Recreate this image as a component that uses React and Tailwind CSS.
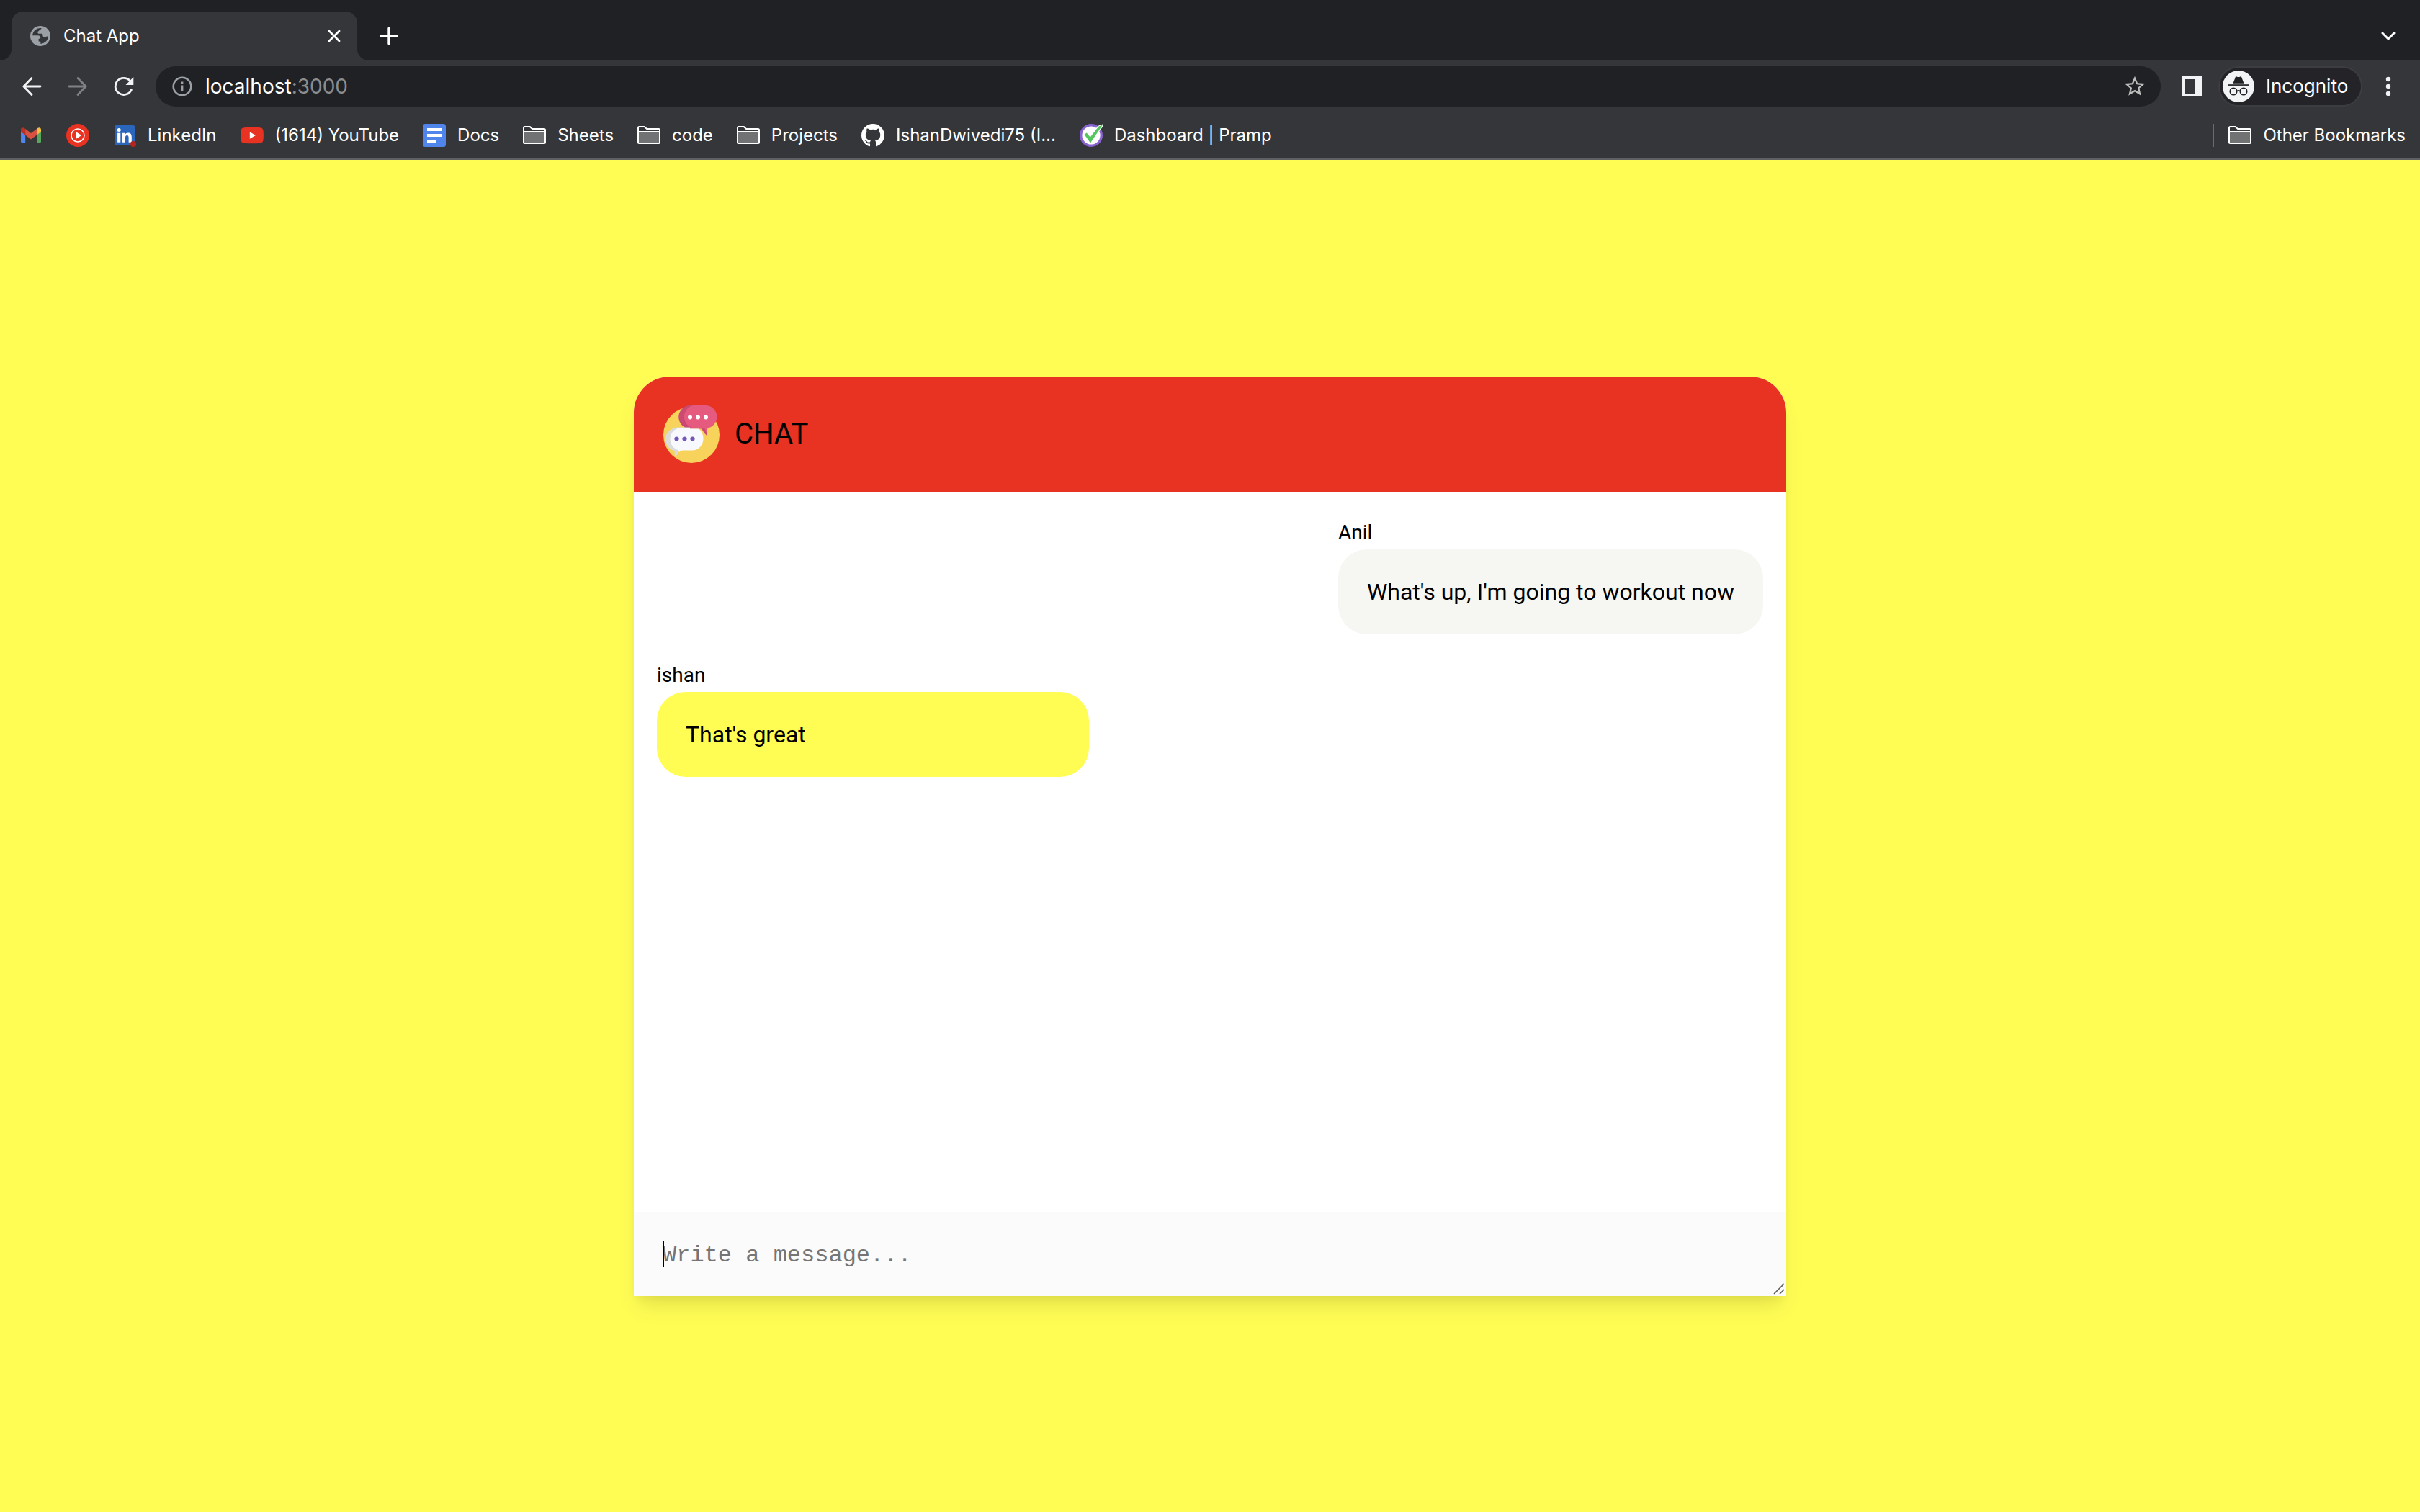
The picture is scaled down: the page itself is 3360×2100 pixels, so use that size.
import React from "react";

const Globe = () => (
  <svg viewBox="0 0 28 28" className="size-7 shrink-0" aria-hidden="true">
    <circle cx="14" cy="14" r="14" fill="#9aa0a6" />
    <path
      d="M15.500 3.100C9 2.400 3.800 6.700 3.100 13.200h7.600c2 0 3.600 1.200 3.600 2.800 0 1.300-.9 2-2.700 2v2.600c0 1.200.8 1.400 1.700 1.400.8 0 1.100.5 1.100 1.300v1.600C20.500 24.600 24.900 19.600 24.900 14.500h-2.200c-.9 1-2 1.400-3.300 1.100-1.500-.3-2.100-1.500-2-2.900.1-1.200-.5-1.900-1.700-1.900h-3.400c-1.300 0-2-.8-2-1.900s.8-1.800 1.800-1.900c.4-1.500 1-2.100 2.300-2.300.8-.1 1.100-.7 1.100-1.600z"
      fill="#35363a"
    />
  </svg>
);

const Close = () => (
  <svg viewBox="0 0 18 18" className="size-[18px]" aria-hidden="true">
    <path d="M2 2l14 14M16 2L2 16" stroke="#fff" strokeWidth="2.800" strokeLinecap="round" />
  </svg>
);

const Plus = () => (
  <svg viewBox="0 0 24 24" className="size-6" aria-hidden="true">
    <path d="M12 1.500v21M1.500 12h21" stroke="#fff" strokeWidth="3.400" strokeLinecap="round" />
  </svg>
);

const Chevron = () => (
  <svg viewBox="0 0 20 12" className="h-3 w-5" fill="none" aria-hidden="true">
    <path d="M2 2l8 8 8-8" stroke="#fff" strokeWidth="3" strokeLinecap="round" strokeLinejoin="miter" />
  </svg>
);

const Arrow = ({ color, flip }) => (
  <svg viewBox="0 0 28 28" className={flip ? "size-7 rotate-180" : "size-7"} fill="none" aria-hidden="true">
    <path d="M14 2.500L2.800 14 14 25.500M3 14h23" stroke={color} strokeWidth="2.800" strokeLinecap="round" strokeLinejoin="round" />
  </svg>
);

const Reload = () => (
  <svg viewBox="0 0 28 28" className="size-7" fill="none" aria-hidden="true">
    <path d="M24.300 18.800A11.600 11.600 0 1 1 22.300 6" stroke="#f1f3f4" strokeWidth="2.800" strokeLinecap="round" />
    <path d="M27.300 1v11H16.500z" fill="#f1f3f4" />
  </svg>
);

const Info = () => (
  <svg viewBox="0 0 28 28" className="size-7 shrink-0" fill="none" aria-hidden="true">
    <circle cx="14" cy="14" r="12.300" stroke="#9aa0a6" strokeWidth="2.600" />
    <path d="M12.600 12.600h2.800V20.500h-2.800zM12.600 7.500h2.800v2.800h-2.800z" fill="#9aa0a6" />
  </svg>
);

const Star = () => (
  <svg viewBox="0 0 24 24" className="size-[34px]" aria-hidden="true">
    <path
      d="M22 9.240l-7.190-.62L12 2 9.190 8.630 2 9.240l5.460 4.730L5.820 21 12 17.270 18.180 21l-1.630-7.030L22 9.240zM12 15.400l-3.760 2.270 1-4.280-3.320-2.880 4.380-.38L12 6.100l1.710 4.040 4.380.38-3.320 2.880 1 4.280L12 15.400z"
      fill="#bdbdbd"
    />
  </svg>
);

const SidePanel = () => (
  <svg viewBox="0 0 28 28" className="size-7" aria-hidden="true">
    <path d="M0 0h28v28H0zM4 4v20h14V4z" fill="#f1f3f4" fillRule="evenodd" />
  </svg>
);

const Spy = () => (
  <svg viewBox="0 0 44 44" className="size-11 shrink-0" aria-hidden="true">
    <circle cx="22" cy="22" r="22" fill="#f1f3f4" />
    <path d="M17.700 9.300c.3-.9 1-1.200 1.800-.8 1.700.7 3.300.7 5 0 .8-.4 1.500-.1 1.800.8L29.500 17.800h-15z" fill="#202124" />
    <path d="M8 19.200h28v1.700H8z" fill="#202124" />
    <g fill="none" stroke="#202124" strokeWidth="1.500">
      <circle cx="15" cy="29" r="4.800" />
      <circle cx="29" cy="29" r="4.800" />
      <path d="M19.800 28.500c1.400-1 3-1 4.400 0" />
    </g>
  </svg>
);

const Dots = () => (
  <svg viewBox="0 0 8 28" className="h-7 w-2" fill="#f1f3f4" aria-hidden="true">
    <circle cx="4" cy="4" r="3.200" />
    <circle cx="4" cy="14" r="3.200" />
    <circle cx="4" cy="24" r="3.200" />
  </svg>
);

const Gmail = () => (
  <svg viewBox="0 0 32 32" className="size-8 shrink-0" aria-hidden="true">
    <path d="M2 10.500l6.200 4.500v11.500H4a2 2 0 0 1-2-2z" fill="#4f86ec" />
    <path d="M24 15l6-4.500v14a2 2 0 0 1-2 2h-4z" fill="#58a55c" />
    <path d="M24 7l1.600-1.200c1.900-1.300 4.400-.2 4.400 2.200v3l-6 4.500z" fill="#f2be42" />
    <path d="M8.200 7L6.400 5.800C4.500 4.500 2 5.600 2 8v3l6.200 4.500z" fill="#b83226" />
    <path d="M8.200 7L16 13l8-6v8.500l-8 6-7.800-6z" fill="#d85140" />
  </svg>
);

const YtMusic = () => (
  <svg viewBox="0 0 32 32" className="size-8 shrink-0" aria-hidden="true">
    <circle cx="16" cy="16" r="16" fill="#e83323" />
    <circle cx="16" cy="16" r="9" fill="none" stroke="#fff" strokeWidth="1.500" />
    <path d="M13 10.800v10.400l8.200-5.200z" fill="#fff" />
  </svg>
);

const LinkedIn = () => (
  <svg viewBox="0 0 32 32" className="size-8 shrink-0" aria-hidden="true">
    <rect x="2" y="2" width="28" height="28" rx="2" fill="#2a66bc" />
    <circle cx="8.200" cy="8.600" r="2.500" fill="#fff" />
    <path d="M6.100 12.700h4.200v13H6.100z" fill="#fff" />
    <path d="M12.800 12.700h4v1.800c.8-1.300 2.200-2.100 4-2.100 4.200 0 5 2.700 5 6.300v7h-4.200v-6.300c0-1.500-.1-3.400-2.200-3.400s-2.400 1.600-2.400 3.300v6.400h-4.200z" fill="#fff" />
    <circle cx="28" cy="28" r="4" fill="#b3261e" />
  </svg>
);

const YouTube = () => (
  <svg viewBox="0 0 32 32" className="size-8 shrink-0" aria-hidden="true">
    <path d="M5 5.300c6-.7 16-.7 22 0 3 .3 4.200 1.700 4.500 4.500.5 4 .5 8.400 0 12.400-.3 2.800-1.500 4.200-4.500 4.500-6 .7-16 .7-22 0-3-.3-4.200-1.700-4.500-4.500-.5-4-.5-8.400 0-12.400C.8 7 2 5.600 5 5.300z" fill="#e83323" />
    <path d="M12.800 11.200v9.600L21 16z" fill="#fff" />
  </svg>
);

const Docs = () => (
  <svg viewBox="0 0 32 32" className="size-8 shrink-0" aria-hidden="true">
    <rect width="32" height="32" rx="3.500" fill="#5086ec" />
    <path d="M6 6h20v4H6zM6 14h20v4H6zM6 22h13v4H6z" fill="#fff" />
  </svg>
);

const Folder = () => (
  <svg viewBox="0 0 32 32" className="size-8 shrink-0" aria-hidden="true">
    <path d="M2 11h28v15H2z" fill="#717274" />
    <path d="M1 26V5.500Q1 4 2.500 4h7.300L13 7h16.500Q31 7 31 8.500V25.500Q31 27 29.500 27h-27Q1 27 1 25.500zM1 11h30" fill="none" stroke="#fff" strokeWidth="2" />
  </svg>
);

const GitHub = () => (
  <svg viewBox="0 0 16 16" className="size-8 shrink-0" fill="#fff" aria-hidden="true">
    <path d="M8 0C3.580 0 0 3.580 0 8c0 3.540 2.290 6.530 5.470 7.590.4.070.55-.17.55-.38 0-.19-.01-.82-.01-1.490-2.010.37-2.530-.49-2.690-.94-.09-.23-.48-.94-.82-1.130-.28-.15-.68-.52-.01-.53.63-.01 1.080.58 1.230.82.72 1.210 1.870.87 2.330.66.070-.52.28-.87.51-1.070-1.780-.2-3.640-.89-3.640-3.950 0-.87.31-1.590.82-2.150-.08-.2-.36-1.020.08-2.120 0 0 .67-.21 2.200.82.64-.18 1.320-.27 2-.27s1.360.09 2 .27c1.530-1.040 2.200-.82 2.200-.82.44 1.100.16 1.920.08 2.120.51.56.82 1.270.82 2.150 0 3.070-1.870 3.750-3.650 3.950.29.25.54.73.54 1.480 0 1.070-.01 1.930-.01 2.200 0 .21.15.46.55.38A8.010 8.010 0 0 0 16 8c0-4.420-3.580-8-8-8z" />
  </svg>
);

const Pramp = () => (
  <svg viewBox="0 0 32 32" className="size-8 shrink-0" aria-hidden="true">
    <circle cx="16" cy="16" r="14.300" fill="#fff" stroke="#8764cf" strokeWidth="3.400" />
    <path d="M6 15l3.500-2.500 5 5.500L25 3l7-2.500V4L15.500 27z" fill="#fff" />
    <path d="M6.500 14.800l3.300-2.300 4.900 6L26.500 3.500l5.500-2L15 26.500z" fill="#55c65e" />
  </svg>
);

const ChatLogo = () => (
  <svg viewBox="0 0 80 80" className="size-20 shrink-0" role="img" aria-label="Chat logo">
    <circle cx="40" cy="41" r="39" fill="#f7d35c" />
    <path d="M38 0h20v32.500h4v9c-3-1.500-4.500-6-7-9H38.500a16.250 16.250 0 0 1 0-32.500z" fill="#cb4a72" />
    <path d="M45 0h14.500a16 16 0 0 1 3 31.700c-.8 2.500-.8 7-1.700 10.300-1.800-3-1.300-9-4.800-10.500H45C36.500 31.500 30 24.500 30 16S36.500 0 45 0z" fill="#e65a80" />
    <path d="M58 32c2 2 2.300 6 4 9.500-4-1-5.500-6-8.500-9.500z" fill="#cb4a72" />
    <path d="M22 30.500h16v31.500H24c-2.500 3-4 8-7 10 -.5-3 .5-7-1-9C8.500 61 4 54.500 4 46.500 4 37.500 12 30.500 22 30.500z" fill="#dadbdc" />
    <path d="M26 31h10.500c1 1.200 2 1.500 3.500 1.500h10c4 3 6.500 8 6.500 13.500C56.500 55 50 62.500 41 62.500H28c-2 0-3.500 1-5 2.500-.3-2-1.500-2.700-3-3.500C14 59 10.500 53 10.500 46.500 10.500 38 17.500 31 26 31z" fill="#f8f9fe" />
    <g fill="#fff">
      <circle cx="38" cy="16.500" r="3" />
      <circle cx="49" cy="16.500" r="3" />
      <circle cx="60" cy="16.500" r="3" />
    </g>
    <g fill="#7358b5">
      <circle cx="19.500" cy="46.500" r="3.100" />
      <circle cx="30.500" cy="46.500" r="3.100" />
      <circle cx="41.500" cy="46.500" r="3.100" />
    </g>
  </svg>
);

const bookmarks = [
  { icon: Gmail, name: "Gmail" },
  { icon: YtMusic, name: "YouTube Music" },
  { icon: LinkedIn, label: "LinkedIn" },
  { icon: YouTube, label: "(1614) YouTube" },
  { icon: Docs, label: "Docs" },
  { icon: Folder, label: "Sheets" },
  { icon: Folder, label: "code" },
  { icon: Folder, label: "Projects" },
  { icon: GitHub, label: "IshanDwivedi75 (I..." },
  { icon: Pramp, label: "Dashboard | Pramp" },
];

function Bookmark({ icon: Icon, label, name }) {
  return (
    <a href="#" aria-label={label || name} className="flex items-center gap-4 whitespace-nowrap">
      <Icon />
      {label && <span>{label}</span>}
    </a>
  );
}

function TabStrip() {
  return (
    <div className="flex h-[84px] items-end bg-[#202124]">
      <div className="flex size-4 bg-[#35363a]">
        <div className="size-4 rounded-br-2xl bg-[#202124]" />
      </div>
      <div className="flex h-[68px] w-[480px] items-center rounded-t-2xl bg-[#35363a] pl-[26px] pr-[23px]">
        <Globe />
        <span className="ml-[18px] flex-1 text-[24px] leading-8">Chat App</span>
        <button type="button" aria-label="Close tab">
          <Close />
        </button>
      </div>
      <div className="flex size-4 bg-[#35363a]">
        <div className="size-4 rounded-bl-2xl bg-[#202124]" />
      </div>
      <div className="flex h-[68px] flex-1 items-center justify-between pl-4 pr-[34px]">
        <button type="button" aria-label="New tab">
          <Plus />
        </button>
        <button type="button" aria-label="Search tabs">
          <Chevron />
        </button>
      </div>
    </div>
  );
}

function Toolbar() {
  return (
    <div className="flex h-[72px] items-center pl-[30px] pr-10">
      <div className="flex items-center gap-9">
        <button type="button" aria-label="Back">
          <Arrow color="#f1f3f4" />
        </button>
        <button type="button" aria-label="Forward">
          <Arrow color="#808184" flip />
        </button>
        <button type="button" aria-label="Reload">
          <Reload />
        </button>
      </div>
      <div className="ml-[30px] flex h-14 flex-1 items-center rounded-full bg-[#202124] pl-[23px] pr-[19px] text-[28px] leading-9">
        <Info />
        <span className="ml-[18px] flex-1">
          localhost<span className="text-[#8b8c8e]">:3000</span>
        </span>
        <button type="button" aria-label="Bookmark this page">
          <Star />
        </button>
      </div>
      <button type="button" aria-label="Side panel" className="ml-[30px]">
        <SidePanel />
      </button>
      <button
        type="button"
        className="ml-[22px] mr-8 flex h-14 w-[200px] items-center gap-4 rounded-full border-2 border-[#3c3d41] bg-[#242428] pl-1 text-[26px] leading-9"
      >
        <Spy />
        Incognito
      </button>
      <button type="button" aria-label="Menu">
        <Dots />
      </button>
    </div>
  );
}

function BookmarksBar() {
  return (
    <nav className="flex h-[66px] items-center justify-between border-b-2 border-[#5f6063] pl-[27px] pr-5 text-[24px] leading-8">
      <div className="flex items-center gap-[33px]">
        {bookmarks.map((b) => (
          <Bookmark key={b.label || b.name} {...b} />
        ))}
      </div>
      <div className="flex items-center gap-5">
        <div className="h-8 w-0.5 bg-[#6a6b6e]" />
        <Bookmark icon={Folder} label="Other Bookmarks" />
      </div>
    </nav>
  );
}

const messages = [
  { author: "Anil", text: "What's up, I'm going to workout now", own: false },
  { author: "ishan", text: "That's great", own: true },
];

function Message({ author, text, own }) {
  return (
    <li className={own ? "flex min-w-[600px] flex-col gap-1.5 self-start" : "flex flex-col gap-1.5 self-end"}>
      <span className="text-[28px] leading-[34px]">{author}</span>
      <p className={own ? "rounded-[40px] bg-[#fffd54] p-10 text-[32px] leading-[38px]" : "rounded-[40px] bg-[#f6f6f2] p-10 text-[32px] leading-[38px]"}>
        {text}
      </p>
    </li>
  );
}

function Chat() {
  return (
    <section className="w-full max-w-[1600px] rounded-t-[50px] bg-white font-['Roboto',sans-serif] text-black shadow-[0_20px_30px_-6px_rgba(0,0,0,0.1),0_8px_12px_-4px_rgba(0,0,0,0.05)]">
      <header className="flex items-center gap-5 rounded-t-[50px] bg-[#e83323] p-10">
        <ChatLogo />
        <h1 className="text-[40px] leading-[48px]">CHAT</h1>
      </header>
      <ul className="flex min-h-[1000px] flex-col gap-10 px-8 py-10">
        {messages.map((m) => (
          <Message key={m.author} {...m} />
        ))}
      </ul>
      <form className="relative flex">
        <textarea
          aria-label="Message"
          rows={1}
          placeholder="Write a message..."
          className="block w-full resize-none overflow-hidden bg-[#fbfbfb] px-10 pb-9 pt-10 font-['Courier_New','Liberation_Mono',monospace] text-[32px] leading-[41px] outline-none placeholder:text-[#757575]"
        />
        <span className="absolute left-10 top-10 h-[37px] w-0.5 bg-black" />
        <svg viewBox="0 0 16 16" className="absolute bottom-0.5 right-0.5 size-4" aria-hidden="true">
          <path d="M1 15L15 1M9 15l6-6" stroke="#5a5a5a" strokeWidth="1.600" />
        </svg>
      </form>
    </section>
  );
}

export default function App() {
  return (
    <div className="flex min-h-screen flex-col bg-[#fffd54]">
      <header className="bg-[#35363a] font-['Inter',sans-serif] text-white">
        <TabStrip />
        <Toolbar />
        <BookmarksBar />
      </header>
      <main className="flex flex-1 items-center justify-center">
        <Chat />
      </main>
    </div>
  );
}
